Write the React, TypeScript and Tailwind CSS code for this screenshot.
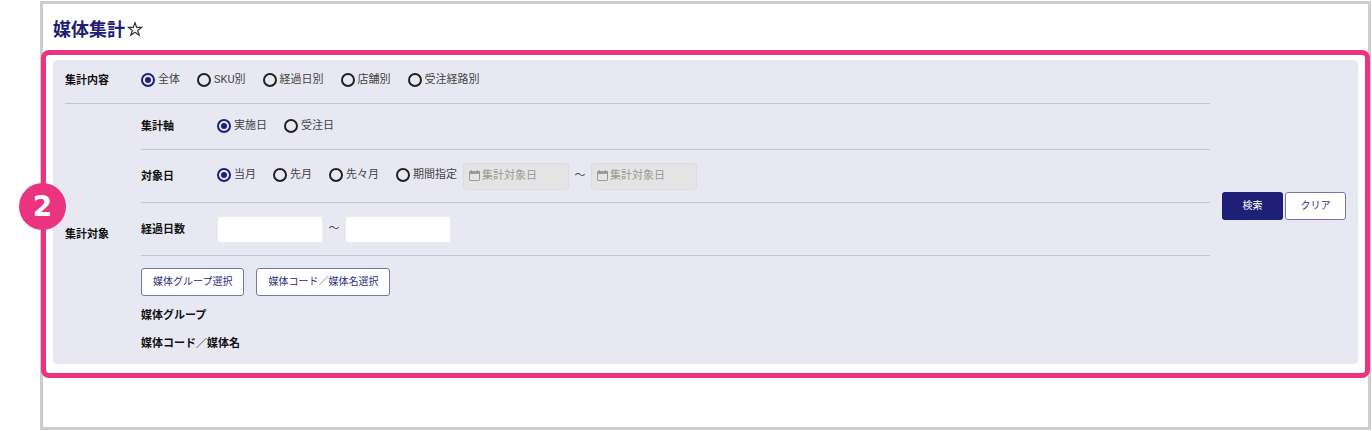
import { useState, type ReactNode } from 'react';
import clsx from 'clsx';

function RadioGroup({ name, label, options }: { name: string; label: string; options: string[] }) {
    const [selected, setSelected] = useState(options[0]);

    return (
        <div role="radiogroup" aria-label={label} className="flex flex-wrap items-center gap-x-[17px]">
            {options.map((option) => (
                <label key={option} className="flex items-center gap-[3px] whitespace-nowrap text-[#444]">
                    <input
                        type="radio"
                        name={name}
                        checked={selected === option}
                        onChange={() => setSelected(option)}
                        className="size-3.5 shrink-0 appearance-none rounded-full border-2 border-[#222] bg-clip-content p-0.5 checked:border-[#1e2078] checked:bg-[#1e2078]"
                    />
                    {option}
                </label>
            ))}
        </div>
    );
}

function Row({ label, className, children }: { label: string; className?: string; children: ReactNode }) {
    return (
        <div className={clsx('flex items-center border-b border-[#c6c6d2]', className)}>
            <div className="w-19 shrink-0 pt-0.5 font-bold text-[#111]">{label}</div>
            {children}
        </div>
    );
}

function DateField({ label }: { label: string }) {
    return (
        <div className="flex h-[27px] w-[106px] items-center gap-0.5 rounded-[3px] border border-[#dcdcdc] bg-[#e4e4e4] px-[5px] text-[#999]">
            <svg viewBox="0 0 11 12" className="h-3 w-[11px] shrink-0" fill="none" stroke="currentColor" aria-hidden="true">
                <rect x=".5" y="1.5" width="10" height="9" rx=".5" />
                <path d="M0 2.5h11" strokeWidth="3" />
                <path d="M2.5 0v2M8.5 0v2" />
            </svg>
            <input
                type="text"
                disabled
                aria-label={label}
                placeholder="集計対象日"
                className="w-full min-w-0 bg-transparent placeholder:text-[#999]"
            />
        </div>
    );
}

function NumberField({ label }: { label: string }) {
    return (
        <input
            type="text"
            inputMode="numeric"
            aria-label={label}
            className="h-[27px] w-[106px] rounded-[3px] border border-[#ececec] bg-white px-2"
        />
    );
}

function Tilde() {
    return <span className="w-[22px] text-center text-[#444]">～</span>;
}

function OutlineButton({ className, children }: { className?: string; children: ReactNode }) {
    return (
        <button
            type="button"
            className={clsx(
                'h-7 whitespace-nowrap rounded-[3px] border border-[#7476b4] bg-white text-[10px] text-[#2d2f80]',
                className
            )}
        >
            {children}
        </button>
    );
}

function SearchPanel() {
    return (
        <form
            onSubmit={(e) => e.preventDefault()}
            className="flex items-center gap-3 rounded bg-[#e8e8f2] px-3 text-[11px] leading-4"
        >
            <div className="min-w-0 flex-1">
                <Row label="集計内容" className="h-11 pb-1">
                    <RadioGroup
                        name="content"
                        label="集計内容"
                        options={['全体', 'SKU別', '経過日別', '店舗別', '受注経路別']}
                    />
                </Row>
                <div className="flex items-center">
                    <div className="w-19 shrink-0 pt-0.5 font-bold text-[#111]">集計対象</div>
                    <div className="min-w-0 flex-1 pb-3">
                        <Row label="集計軸" className="h-[46px] pb-0.5">
                            <RadioGroup name="axis" label="集計軸" options={['実施日', '受注日']} />
                        </Row>
                        <Row label="対象日" className="h-[53px]">
                            <div className="pb-0.5">
                                <RadioGroup
                                    name="period"
                                    label="対象日"
                                    options={['当月', '先月', '先々月', '期間指定']}
                                />
                            </div>
                            <div className="ml-1.5 flex items-center">
                                <DateField label="集計対象日（開始）" />
                                <Tilde />
                                <DateField label="集計対象日（終了）" />
                            </div>
                        </Row>
                        <Row label="経過日数" className="h-[53px]">
                            <div className="flex items-center">
                                <NumberField label="経過日数（開始）" />
                                <Tilde />
                                <NumberField label="経過日数（終了）" />
                            </div>
                        </Row>
                        <div className="mt-3 flex gap-3">
                            <OutlineButton className="px-[11px]">媒体グループ選択</OutlineButton>
                            <OutlineButton className="px-[11px]">媒体コード／媒体名選択</OutlineButton>
                        </div>
                        <div className="mt-3 flex flex-col gap-3 font-bold text-[#111]">
                            <p>媒体グループ</p>
                            <p>媒体コード／媒体名</p>
                        </div>
                    </div>
                </div>
            </div>
            <div className="flex shrink-0 gap-0.5 pb-3">
                <button type="submit" className="h-7 w-[61px] rounded-[3px] bg-[#1e2078] text-[10px] text-white">
                    検索
                </button>
                <OutlineButton className="w-[61px]">クリア</OutlineButton>
            </div>
        </form>
    );
}

export default function App() {
    return (
        <div className="bg-white pt-px pr-px pl-10 font-['Roboto','Noto_Sans_CJK_JP',sans-serif]">
            <main className="border-3 border-[#cdcdcd] pb-[49px]">
                <h1 className="flex h-[46px] items-center pt-1 pl-2.5 text-[18px] font-bold text-[#1e2078]">
                    媒体集計
                    <button type="button" aria-label="お気に入り" className="ml-0.5 text-[#333]">
                        <svg viewBox="0 0 16 16" className="size-4" fill="none" stroke="currentColor" strokeWidth="1.2">
                            <path d="M8 1.8l1.7 4.6h4.9l-3.9 3 1.5 4.8L8 11.3l-4.2 2.9 1.5-4.8-3.9-3h4.9z" />
                        </svg>
                    </button>
                </h1>
                <section className="relative -mx-0.5 rounded-lg border-5 border-[#ec3380] bg-white px-[7px] pt-[5px] pb-[9px]">
                    <SearchPanel />
                    {/* Step number sitting on the left edge of the frame */}
                    <span className="absolute top-1/2 -left-[27px] flex size-[47px] -translate-y-[31px] items-center justify-center rounded-full bg-[#ec3380] font-['DejaVu_Sans',sans-serif] text-[28px] font-bold text-white">
                        2
                    </span>
                </section>
            </main>
        </div>
    );
}
